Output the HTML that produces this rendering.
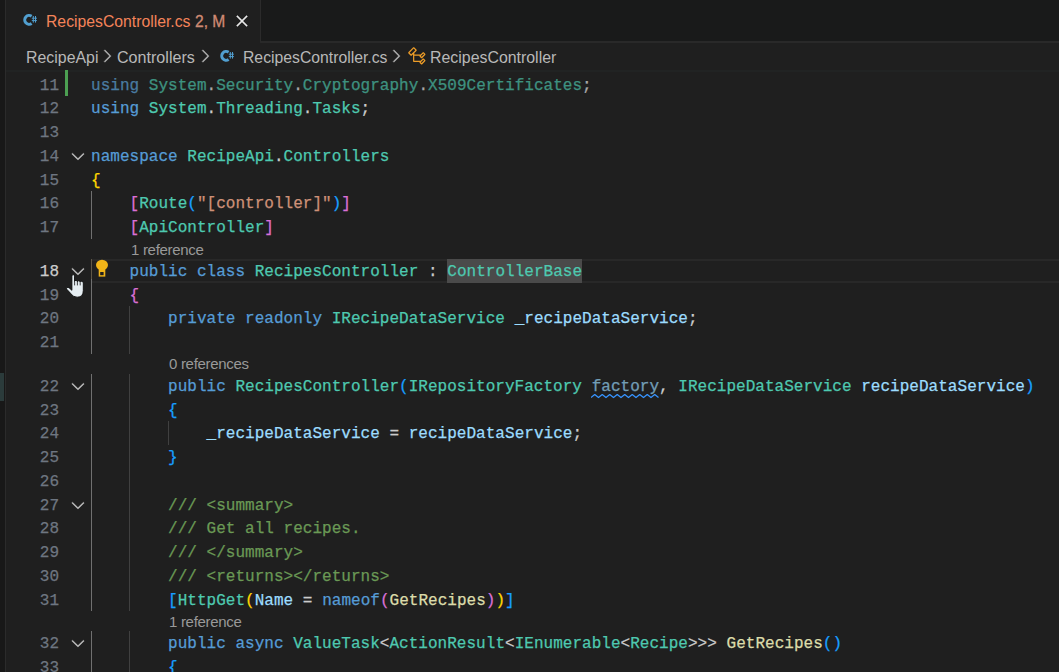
<!DOCTYPE html>
<html><head><meta charset="utf-8"><style>
*{margin:0;padding:0;box-sizing:border-box}
html,body{width:1059px;height:672px;overflow:hidden;background:#1f1f1f}
.a{position:absolute}
.ui{font-family:"Liberation Sans",sans-serif}
.ln{position:absolute;left:0;width:59px;text-align:right;font:16px/24px "Liberation Mono",monospace;color:#6e7681;white-space:pre;-webkit-text-stroke:0.25px currentColor}
.cl{position:absolute;left:91px;font:16px/24px "Liberation Mono",monospace;white-space:pre;color:#cccccc;-webkit-text-stroke:0.25px currentColor;letter-spacing:0.025px}
.k{color:#569cd6}.t{color:#4ec9b0}.p{color:#cccccc}.s{color:#ce9178}.v{color:#9cdcfe}.f{color:#dcdcaa}
.c{color:#6a9955}.cx{color:#6a9955}.g{color:#cccccc}
.b1{color:#ffd700}.b2{color:#da70d6}.b3{color:#179fff}
.fk{color:#4f86b0;opacity:.9}.fv{color:#9cdcfe;opacity:.67}.ft{color:#4ec9b0;opacity:.67}.fp{color:#cccccc;opacity:.8}
.hl{}
.lens{position:absolute;font:15px/20px "Liberation Sans",sans-serif;letter-spacing:-0.3px;color:#999999;white-space:pre}
.guide{position:absolute;width:1px;background:#404040}
.chev{position:absolute;left:71px;width:13px;height:8px}
</style></head><body>

<div class="a" style="left:0;top:0;width:5px;height:672px;background:#181818"></div>
<div class="a" style="left:5px;top:0;width:1px;height:672px;background:#2b2b2b"></div>
<div class="a" style="left:0;top:373px;width:4px;height:28px;background:#2b3b3b"></div>
<div class="a" style="left:260px;top:0;width:799px;height:43px;background:#191a1a;border-left:1px solid #2b2b2b;border-bottom:2px solid #292929"></div>
<div class="a" style="left:6px;top:70px;width:1053px;height:2px;background:#212323"></div>
<svg class="a" style="left:18px;top:8px" width="24" height="24" viewBox="0 0 24 24">
<path d="M13.62 8.3 A4.4 4.4 0 1 0 13.62 15.5" fill="none" stroke="#519fd0" stroke-width="2.9"/>
<path d="M15.3 8v6.6M17.5 8v6.6M13.8 10.2h5.1M13.8 12.6h5.1" stroke="#519fd0" stroke-width="1"/>
</svg>
<div class="a ui" style="left:46px;top:12px;font-size:15.75px;line-height:20px;color:#f4845a;white-space:pre">RecipesController.cs</div>
<div class="a ui" style="left:195px;top:12px;font-size:15.6px;line-height:20px;color:#cf8a73;white-space:pre;-webkit-text-stroke:0.3px currentColor">2, M</div>
<svg class="a" style="left:231.9px;top:10.7px" width="20" height="20" viewBox="0 0 16 16"><path fill="#e8e8e8" stroke="#e8e8e8" stroke-width="0.35" d="M8 8.707l3.646 3.647.708-.707L8.707 8l3.647-3.646-.707-.708L8 7.293 4.354 3.646l-.707.708L7.293 8l-3.646 3.646.707.708L8 8.707z"/></svg>
<div class="a ui" style="left:26px;top:47.5px;font-size:15.9px;line-height:20px;color:#b8b8b8;white-space:pre">RecipeApi</div>
<svg class="a" style="left:96.8px;top:46.1px" width="20" height="20" viewBox="0 0 16 16"><path fill="#b8b8b8" stroke="#b8b8b8" stroke-width="0.3" d="M10.072 8.024L5.715 3.667l.618-.62L11 7.716v.618L6.333 13l-.618-.619 4.357-4.357z"/></svg>
<div class="a ui" style="left:117px;top:47px;font-size:16.1px;line-height:20px;color:#b8b8b8;white-space:pre">Controllers</div>
<svg class="a" style="left:194.8px;top:46.1px" width="20" height="20" viewBox="0 0 16 16"><path fill="#b8b8b8" stroke="#b8b8b8" stroke-width="0.3" d="M10.072 8.024L5.715 3.667l.618-.62L11 7.716v.618L6.333 13l-.618-.619 4.357-4.357z"/></svg>
<svg class="a" style="left:214.6px;top:44.4px" width="24" height="24" viewBox="0 0 24 24">
<path d="M13.62 8.3 A4.4 4.4 0 1 0 13.62 15.5" fill="none" stroke="#519fd0" stroke-width="2.9"/>
<path d="M15.3 8v6.6M17.5 8v6.6M13.8 10.2h5.1M13.8 12.6h5.1" stroke="#519fd0" stroke-width="1"/>
</svg>
<div class="a ui" style="left:243px;top:47.5px;font-size:15.75px;line-height:20px;color:#b8b8b8;white-space:pre">RecipesController.cs</div>
<svg class="a" style="left:385.9px;top:46.1px" width="20" height="20" viewBox="0 0 16 16"><path fill="#b8b8b8" stroke="#b8b8b8" stroke-width="0.3" d="M10.072 8.024L5.715 3.667l.618-.62L11 7.716v.618L6.333 13l-.618-.619 4.357-4.357z"/></svg>
<svg class="a" style="left:406.6px;top:45.8px" width="20" height="20" viewBox="0 0 16 16"><path fill="#ee9d28" d="M11.34 9.71h.71l2.67-2.67v-.71L13.38 5h-.7l-1.82 1.81h-5V5.56l1.86-1.85V3l-2-2H5L1 5v.71l2 2h.71l1.14-1.15v5.79l.5.5H10v.52l1.33 1.34h.71l2.67-2.67v-.71L13.37 10h-.7l-1.86 1.85h-5v-4H10v.48l1.34 1.38zm1.69-3.65.63.63-2 2-.63-.63 2-2zm0 5 .63.63-2 2-.63-.63 2-2zM3.35 6.65 2.06 5.36 5.35 2.07l1.29 1.29-3.29 3.29z"/></svg>
<div class="a ui" style="left:430px;top:47.5px;font-size:15.9px;line-height:20px;color:#b8b8b8;white-space:pre">RecipesController</div>
<div class="a" style="left:92px;top:259px;width:967px;height:24px;border-top:2px solid #282828;border-bottom:2px solid #282828"></div>
<div class="a" style="left:447px;top:259px;width:135px;height:24px;background:#4a4a4a"></div>
<div class="a" style="left:65px;top:70px;width:3px;height:26px;background:#4c9f52"></div>
<div class="guide" style="left:91px;top:191px;height:48px;background:#707070"></div>
<div class="guide" style="left:91px;top:259px;height:20px;background:#5f5747"></div>
<div class="guide" style="left:91px;top:279px;height:75px;background:#707070"></div>
<div class="guide" style="left:91px;top:374px;height:237px;background:#707070"></div>
<div class="guide" style="left:91px;top:631px;height:41px;background:#707070"></div>
<div class="guide" style="left:129px;top:306px;height:48px;background:#404040"></div>
<div class="guide" style="left:129px;top:374px;height:237px;background:#404040"></div>
<div class="guide" style="left:129px;top:631px;height:41px;background:#404040"></div>
<div class="guide" style="left:168px;top:421px;height:24px;background:#404040"></div>
<div class="ln" style="top:74px;color:#6e7681">11</div>
<div class="cl" style="top:74px"><span class="fk">using</span><span class="fw"> </span><span class="ft">System</span><span class="fp">.</span><span class="ft">Security</span><span class="fp">.</span><span class="ft">Cryptography</span><span class="fp">.</span><span class="ft">X509Certificates</span><span class="fp">;</span></div>
<div class="ln" style="top:97px;color:#6e7681">12</div>
<div class="cl" style="top:97px"><span class="k">using</span><span class="w"> </span><span class="t">System</span><span class="p">.</span><span class="t">Threading</span><span class="p">.</span><span class="t">Tasks</span><span class="p">;</span></div>
<div class="ln" style="top:121px;color:#6e7681">13</div>
<div class="cl" style="top:121px"></div>
<div class="ln" style="top:145px;color:#6e7681">14</div>
<div class="cl" style="top:145px"><span class="k">namespace</span><span class="w"> </span><span class="t">RecipeApi</span><span class="p">.</span><span class="t">Controllers</span></div>
<div class="ln" style="top:169px;color:#6e7681">15</div>
<div class="cl" style="top:169px"><span class="b1">{</span></div>
<div class="ln" style="top:192px;color:#6e7681">16</div>
<div class="cl" style="top:192px"><span class="w">    </span><span class="b2">[</span><span class="t">Route</span><span class="b3">(</span><span class="s">&quot;[controller]&quot;</span><span class="b3">)</span><span class="b2">]</span></div>
<div class="ln" style="top:216px;color:#6e7681">17</div>
<div class="cl" style="top:216px"><span class="w">    </span><span class="b2">[</span><span class="t">ApiController</span><span class="b2">]</span></div>
<div class="ln" style="top:260px;color:#cccccc">18</div>
<div class="cl" style="top:260px"><span class="w">    </span><span class="k">public</span><span class="w"> </span><span class="k">class</span><span class="w"> </span><span class="t">RecipesController</span><span class="w"> </span><span class="p">:</span><span class="w"> </span><span class="t hl">ControllerBase</span></div>
<div class="ln" style="top:284px;color:#6e7681">19</div>
<div class="cl" style="top:284px"><span class="w">    </span><span class="b2">{</span></div>
<div class="ln" style="top:307px;color:#6e7681">20</div>
<div class="cl" style="top:307px"><span class="w">        </span><span class="k">private</span><span class="w"> </span><span class="k">readonly</span><span class="w"> </span><span class="t">IRecipeDataService</span><span class="w"> </span><span class="v">_recipeDataService</span><span class="p">;</span></div>
<div class="ln" style="top:331px;color:#6e7681">21</div>
<div class="cl" style="top:331px"></div>
<div class="ln" style="top:375px;color:#6e7681">22</div>
<div class="cl" style="top:375px"><span class="w">        </span><span class="k">public</span><span class="w"> </span><span class="t">RecipesController</span><span class="b3">(</span><span class="t">IRepositoryFactory</span><span class="w"> </span><span class="fv">factory</span><span class="p">,</span><span class="w"> </span><span class="t">IRecipeDataService</span><span class="w"> </span><span class="v">recipeDataService</span><span class="b3">)</span></div>
<div class="ln" style="top:399px;color:#6e7681">23</div>
<div class="cl" style="top:399px"><span class="w">        </span><span class="b3">{</span></div>
<div class="ln" style="top:422px;color:#6e7681">24</div>
<div class="cl" style="top:422px"><span class="w">            </span><span class="v">_recipeDataService</span><span class="w"> </span><span class="p">=</span><span class="w"> </span><span class="v">recipeDataService</span><span class="p">;</span></div>
<div class="ln" style="top:446px;color:#6e7681">25</div>
<div class="cl" style="top:446px"><span class="w">        </span><span class="b3">}</span></div>
<div class="ln" style="top:470px;color:#6e7681">26</div>
<div class="cl" style="top:470px"></div>
<div class="ln" style="top:494px;color:#6e7681">27</div>
<div class="cl" style="top:494px"><span class="w">        </span><span class="c">/// </span><span class="cx">&lt;summary&gt;</span></div>
<div class="ln" style="top:517px;color:#6e7681">28</div>
<div class="cl" style="top:517px"><span class="w">        </span><span class="c">/// Get all recipes.</span></div>
<div class="ln" style="top:541px;color:#6e7681">29</div>
<div class="cl" style="top:541px"><span class="w">        </span><span class="c">/// </span><span class="cx">&lt;/summary&gt;</span></div>
<div class="ln" style="top:565px;color:#6e7681">30</div>
<div class="cl" style="top:565px"><span class="w">        </span><span class="c">/// </span><span class="cx">&lt;returns&gt;&lt;/returns&gt;</span></div>
<div class="ln" style="top:589px;color:#6e7681">31</div>
<div class="cl" style="top:589px"><span class="w">        </span><span class="b3">[</span><span class="t">HttpGet</span><span class="b1">(</span><span class="v">Name</span><span class="w"> </span><span class="p">=</span><span class="w"> </span><span class="k">nameof</span><span class="b2">(</span><span class="f">GetRecipes</span><span class="b2">)</span><span class="b1">)</span><span class="b3">]</span></div>
<div class="ln" style="top:632px;color:#6e7681">32</div>
<div class="cl" style="top:632px"><span class="w">        </span><span class="k">public</span><span class="w"> </span><span class="k">async</span><span class="w"> </span><span class="t">ValueTask</span><span class="g">&lt;</span><span class="t">ActionResult</span><span class="g">&lt;</span><span class="t">IEnumerable</span><span class="g">&lt;</span><span class="t">Recipe</span><span class="g">&gt;&gt;&gt;</span><span class="w"> </span><span class="f">GetRecipes</span><span class="b3">()</span></div>
<div class="ln" style="top:656px;color:#6e7681">33</div>
<div class="cl" style="top:656px"><span class="w">        </span><span class="b3">{</span></div>
<div class="lens" style="left:131px;top:240px">1 reference</div>
<div class="lens" style="left:169px;top:354px">0 references</div>
<div class="lens" style="left:169px;top:612px">1 reference</div>
<svg class="a" style="left:67.8px;top:146.2px" width="20" height="20" viewBox="0 0 16 16"><path fill="#c5c5c5" stroke="#c5c5c5" stroke-width="0.3" d="M7.976 10.072l4.357-4.357.62.618L8.284 11h-.618L3 6.333l.619-.618 4.357 4.357z"/></svg>
<svg class="a" style="left:67.8px;top:261.2px" width="20" height="20" viewBox="0 0 16 16"><path fill="#c5c5c5" stroke="#c5c5c5" stroke-width="0.3" d="M7.976 10.072l4.357-4.357.62.618L8.284 11h-.618L3 6.333l.619-.618 4.357 4.357z"/></svg>
<svg class="a" style="left:67.8px;top:376.2px" width="20" height="20" viewBox="0 0 16 16"><path fill="#c5c5c5" stroke="#c5c5c5" stroke-width="0.3" d="M7.976 10.072l4.357-4.357.62.618L8.284 11h-.618L3 6.333l.619-.618 4.357 4.357z"/></svg>
<svg class="a" style="left:67.8px;top:495.2px" width="20" height="20" viewBox="0 0 16 16"><path fill="#c5c5c5" stroke="#c5c5c5" stroke-width="0.3" d="M7.976 10.072l4.357-4.357.62.618L8.284 11h-.618L3 6.333l.619-.618 4.357 4.357z"/></svg>
<svg class="a" style="left:67.8px;top:633.2px" width="20" height="20" viewBox="0 0 16 16"><path fill="#c5c5c5" stroke="#c5c5c5" stroke-width="0.3" d="M7.976 10.072l4.357-4.357.62.618L8.284 11h-.618L3 6.333l.619-.618 4.357 4.357z"/></svg>
<svg class="a" style="left:95px;top:259px" width="14" height="19" viewBox="0 0 14 19">
<ellipse cx="7" cy="6.1" rx="6" ry="5.3" fill="#f0b418"/>
<rect x="3.7" y="8.5" width="6.6" height="9.1" fill="#f0b418"/>
<rect x="5.2" y="13" width="3.4" height="3.2" fill="#1f1f1f"/>
</svg>
<svg class="a" style="left:591px;top:394px" width="70" height="5" viewBox="0 0 70 5"><polyline points="0.00,3.6 3.75,0.6 7.50,3.6 11.25,0.6 15.00,3.6 18.75,0.6 22.50,3.6 26.25,0.6 30.00,3.6 33.75,0.6 37.50,3.6 41.25,0.6 45.00,3.6 48.75,0.6 52.50,3.6 56.25,0.6 60.00,3.6 63.75,0.6 67.50,3.6" fill="none" stroke="#3794ff" stroke-width="1.3" stroke-linejoin="round"/></svg>
<svg class="a" style="left:60px;top:255px" width="42" height="45" viewBox="0 0 42 45">
<path d="M11.9 21.2Q11.9 19.5 13.2 19.5Q14.5 19.5 14.5 21.2V26.6Q14.8 25.4 16 25.4Q17.2 25.4 17.4 26.8Q17.7 25.7 18.8 25.7Q20 25.7 20.2 27.2Q20.5 26.3 21.7 26.3Q23.3 26.3 23.3 28V35.5Q23.3 42.2 17.2 42.2Q13 42.2 10.8 38.6L7 34.5Q6 33.2 7.1 32.6Q8.2 32 9.5 33.2L11.9 35.3Z" fill="#e6eef2" stroke="#0c0c0c" stroke-width="0.9" stroke-linejoin="round"/>
<path d="M14.6 26.8v3.6M17.4 27v3.4M20.2 27.4v3" stroke="#151515" stroke-width="0.8"/>
</svg>
</body></html>
